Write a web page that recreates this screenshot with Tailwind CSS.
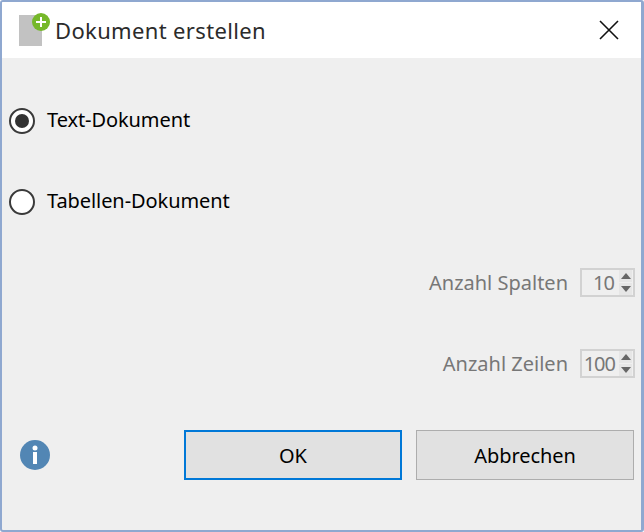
<!DOCTYPE html>
<html lang="de">
  <head>
    <meta charset="UTF-8" />
    <title>Dokument erstellen</title>
    <script src="https://cdn.jsdelivr.net/npm/@tailwindcss/browser@4"></script>
  </head>
  <body class="bg-white font-['Noto_Sans',sans-serif]">
    <div class="w-[644px] h-[532px] flex flex-col bg-[#efefef] border-2 border-r-[3px] border-[#8fa8d0] rounded-[3px] overflow-hidden">
      <!-- title bar -->
      <header class="h-[56px] shrink-0 bg-white flex items-center pl-[17px] pr-[22px]">
        <div class="relative w-[23px] h-[31px] mt-[1px] bg-[#c2c2c2]">
          <svg class="absolute left-[13px] top-[-2px]" width="18" height="18" viewBox="0 0 18 18">
            <circle cx="9" cy="9" r="9" fill="#76b82a" />
            <path d="M9 4v10M4 9h10" stroke="#fff" stroke-width="2" />
          </svg>
        </div>
        <h1 class="ml-[13px] text-[22px] leading-none text-[#2b2b2b] tracking-[0.35px]">Dokument erstellen</h1>
        <svg class="ml-auto" width="20" height="20" viewBox="0 0 20 20">
          <path d="M1 1l18 18M19 1L1 19" stroke="#111" stroke-width="1.6" fill="none" />
        </svg>
      </header>

      <div class="flex-1 flex flex-col pt-[22px]">
        <!-- document type -->
        <label class="h-[81px] flex items-center pl-[7px] gap-[12px] text-[20px] tracking-[-0.08px] text-black">
          <span class="w-[26px] h-[26px] rounded-full border-[2.5px] border-[#3a3a3a] bg-white flex items-center justify-center">
            <span class="w-[14px] h-[14px] rounded-full bg-[#333]"></span>
          </span>
          <span class="-mt-[2px]">Text-Dokument</span>
        </label>
        <label class="h-[81px] flex items-center pl-[7px] gap-[12px] text-[20px] tracking-[-0.08px] text-black">
          <span class="w-[26px] h-[26px] rounded-full border-[2.5px] border-[#3a3a3a] bg-white"></span>
          <span class="-mt-[2px]">Tabellen-Dokument</span>
        </label>

        <!-- disabled spinners -->
        <div class="h-[81px] flex items-center justify-end pr-[6px] gap-[12px] text-[20px] text-[#777]">
          <span>Anzahl Spalten</span>
          <div class="w-[55px] h-[29px] border-2 border-[#d2d2d2] flex items-center justify-between">
            <span class="flex-1 text-right pr-[5px] leading-none tracking-[-1px]">10</span>
            <div class="w-[13px] h-[25px] flex flex-col gap-[1px] mr-[1px]">
              <span class="flex-1 bg-[#e6e6e6] flex items-center justify-center"><svg width="10" height="6" viewBox="0 0 10 6"><path d="M5 0l5 6H0z" fill="#666" /></svg></span>
              <span class="flex-1 bg-[#e6e6e6] flex items-center justify-center"><svg width="10" height="6" viewBox="0 0 10 6"><path d="M5 6l5-6H0z" fill="#666" /></svg></span>
            </div>
          </div>
        </div>
        <div class="h-[81px] flex items-center justify-end pr-[6px] gap-[12px] text-[20px] text-[#777]">
          <span>Anzahl Zeilen</span>
          <div class="w-[55px] h-[29px] border-2 border-[#d2d2d2] flex items-center justify-between">
            <span class="flex-1 text-right pr-[4px] leading-none tracking-[-1px]">100</span>
            <div class="w-[13px] h-[25px] flex flex-col gap-[1px] mr-[1px]">
              <span class="flex-1 bg-[#e6e6e6] flex items-center justify-center"><svg width="10" height="6" viewBox="0 0 10 6"><path d="M5 0l5 6H0z" fill="#666" /></svg></span>
              <span class="flex-1 bg-[#e6e6e6] flex items-center justify-center"><svg width="10" height="6" viewBox="0 0 10 6"><path d="M5 6l5-6H0z" fill="#666" /></svg></span>
            </div>
          </div>
        </div>

        <!-- footer -->
        <footer class="mt-[26px] flex items-center pl-[18px] pr-[7px] text-[20px] text-black">
          <svg width="30" height="30" viewBox="0 0 30 30">
            <circle cx="15" cy="15" r="15" fill="#5286b4" />
            <circle cx="15" cy="8" r="2.5" fill="#fff" />
            <rect x="13" y="12" width="4" height="12" fill="#fff" />
          </svg>
          <button class="ml-auto w-[218px] h-[50px] pt-[2px] bg-[#e1e1e1] border-2 border-[#0078d7]">OK</button>
          <button class="ml-[14px] w-[218px] h-[50px] pt-[2px] bg-[#e1e1e1] border border-[#adadad] tracking-[-0.08px]">Abbrechen</button>
        </footer>
      </div>
    </div>
  </body>
</html>
